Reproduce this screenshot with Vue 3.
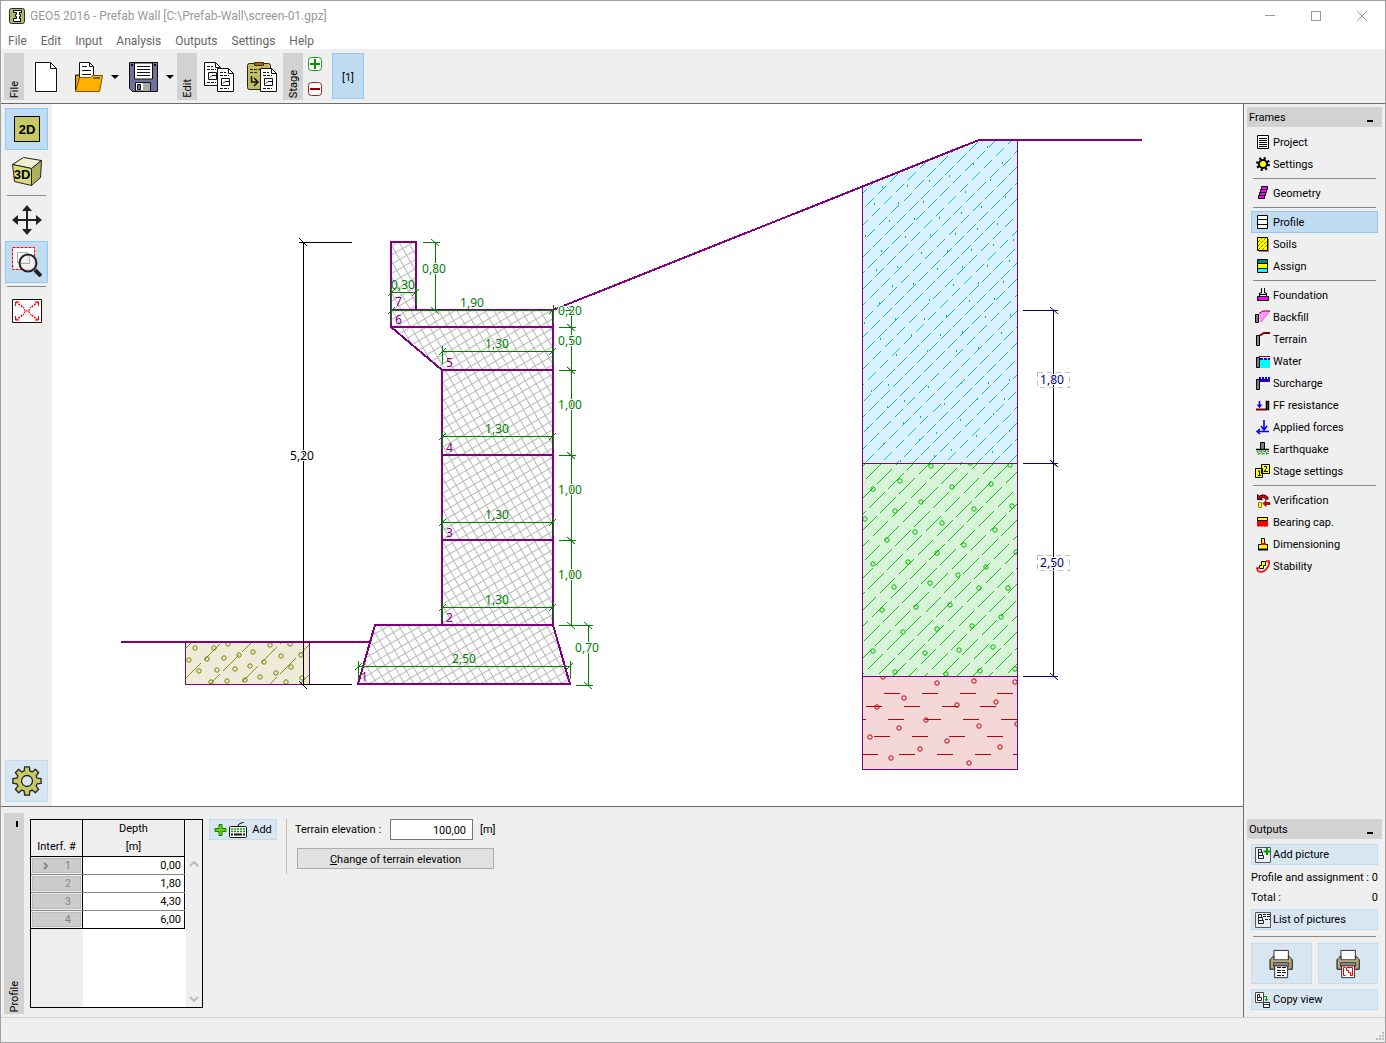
<script setup>
import { ref } from 'vue'

const menus = ['File', 'Edit', 'Input', 'Analysis', 'Outputs', 'Settings', 'Help']

const terrain = ref('100,00')
const active = ref('Profile')

const wallBlock = '<path d="M1.5 4.5h3v10h-3z" fill="#808080" stroke="#000"/>'
const printer = '<path d="M6.500 11V1.500h19V11" fill="#fff" stroke="#111"/><path d="M1.500 11.500l4-4h1v4h19v-4h1l4 4v10h-4v-7h-21v7h-4z" fill="#b5a77c" stroke="#222"/><path d="M2 12h28v9H2z" fill="#b5a77c"/><path d="M1.500 11v10.500h29V11" fill="none" stroke="#222"/><path d="M6 14.500h20v4H6z" fill="#888" stroke="#333"/><path d="M7.500 18h17v12.500h-17z" fill="#fff" stroke="#111"/>'
const pageA = '<path d="M1.500 1.500h15v15h-15z" fill="#e8eef4" stroke="#555"/><path d="M4.500 3.500v9M4.500 3.500h3v3M4.500 6.500h4v3M4.500 9.500h5v3h-5z" fill="none" stroke="#222"/>'
const report = '<path d="M.5.5h11l5 5v18h-16z" fill="#fff" stroke="#111"/><path d="M11.500.5v5h5" fill="none" stroke="#111"/><path d="M3 4.500h6M3 7.500h9M3 20.500h9" stroke="#111" stroke-dasharray="3 1"/><path d="M4.500 10.500h8v7h-8zM6 15.500l2-2h4" fill="none" stroke="#111"/>'

const icons = {
  Project: '<path d="M2.500 1.500h11v13h-11z" fill="#fff" stroke="#000"/><path d="M4 4.500h8M4 6.500h8M4 8.500h8M4 10.500h8M4 12.500h8" stroke="#000"/>',
  Settings: '<circle cx="8" cy="8" r="5.500" fill="none" stroke="#000" stroke-width="3" stroke-dasharray="2 2.320"/><circle cx="8" cy="8" r="4" fill="#ff0" stroke="#000" stroke-width="2"/>',
  Geometry: '<path d="M6.500 1.500h6v3h-6zM5.500 4.500h6v3h-6zM4.500 7.500h6v3h-6zM3.500 10.500h6v3h-6z" fill="#f0f" stroke="#000"/>',
  Profile: '<path d="M2.500 1.500h10v13h-10zM2.500 5.500h10M2.500 10.500h10" fill="#fff" stroke="#000"/>',
  Soils: '<path d="M4 3h10v13H4z" fill="#888"/><path d="M2.500 1.500h10v13h-10z" fill="#ff0" stroke="#000"/><path d="M3 6l4-4M3 10l8-8M3 14l9-9M7 14l5-5" stroke="#770" stroke-dasharray="3 1"/>',
  Assign: '<path d="M2.500 1.500h10v13h-10z" fill="#ff0" stroke="#000"/><path d="M3 2h9v3H3z" fill="#088"/><path d="M3 11h9v3H3z" fill="#0ff"/><path d="M3 5.500h9M3 10.500h9" stroke="#000"/>',
  Foundation: '<path d="M6.500 1v5h-2v3M9.500 1v5h2v3" fill="none" stroke="#000"/><path d="M2.500 9.500h11v4h-11z" fill="#f0f" stroke="#000"/><path d="M4 7.500h8" stroke="#000"/>',
  Backfill: '<path d="M4 5l4-3h7L6 13H5z" fill="#f9f"/><path d="M15 2L6 13" stroke="#f0f" stroke-dasharray="2 1"/><path d="M.5 5.500h3v8h-3z" fill="#808080" stroke="#000"/><path d="M4 4.500l4-2.500h7" fill="none" stroke="#800000"/>',
  Terrain: wallBlock + '<path d="M4 5l5-3h6" fill="none" stroke="#800000" stroke-width="2"/>',
  Water: '<path d="M5 6h10v9H5z" fill="#0ff"/><path d="M5 6h10" stroke="#00f" stroke-width="2" stroke-dasharray="3 1"/><path d="M4 3.500h11" stroke="#a00000"/>' + wallBlock,
  Surcharge: '<path d="M4 2h2v2h1V2h2v2h1V2h2v2h1V2h2v4H4z" fill="#00f"/><path d="M4 6.500h11" stroke="#800000"/>' + wallBlock,
  'FF resistance': '<path d="M4.500 4v6M2.500 7.500l2 2.500 2-2.500" fill="none" stroke="#00f" stroke-width="1.500"/><path d="M1 12.500h10" stroke="#800000" stroke-width="2"/><path d="M11.500 4.500h2v8h-2z" fill="#808080" stroke="#000" stroke-width="1.500"/>',
  'Applied forces': '<path d="M9 1v9M6 7l3 4 3-4M14 12.500H3M5 10l-3 2.500L5 15" fill="none" stroke="#00f" stroke-width="1.600"/>',
  Earthquake: '<path d="M5.500 1.500h4v7h-4z" fill="#808080" stroke="#000"/><path d="M1 8.500h13" stroke="#000" stroke-width="1.500"/><path d="M3 9l-1 2 2 1-1 2M7 9l-1 2 2 1-1 2M11 9l-1 2 2 1-1 2" fill="none" stroke="#0b0"/><path d="M5 10v4M9 10v4M13 10v4" stroke="#000" stroke-dasharray="1 1"/>',
  'Stage settings': '<path d="M6.500 1.500h8v9h-8zM.500 5.500h7v9h-7z" fill="#ff0" stroke="#000"/><path d="M9 3.500h2.500v2L9 8.500h4M3 8h1.500v4M3 12.500h3" fill="none" stroke="#000"/>',
  Verification: '<path d="M5 5.500a4 3.500 0 0 1 7 2" fill="none" stroke="#000" stroke-width="3.500"/><path d="M5 5.500a4 3.500 0 0 1 7 2" fill="none" stroke="#e00" stroke-width="2"/><path d="M2.500 2.500v5h5z" fill="#e00" stroke="#000"/><path d="M3.500 10.500h3v5h-3z" fill="#ff0" stroke="#880"/><path d="M8 11.500l3-3v2h4v2h-4v2z" fill="#e00" stroke="#600" stroke-width=".7"/>',
  'Bearing cap.': '<path d="M2.500 3.500h10v3h-10z" fill="#ff0" stroke="#000"/><path d="M2 7h11v5l-1 1-1-1-1 1-2-1-1 1-2-1-2 1-1-1z" fill="#f00"/>',
  Dimensioning: '<path d="M6.500 2.500h3v6h3v5h-9v-5h3z" fill="#ff0" stroke="#000"/><path d="M6 8h5" stroke="#f00" stroke-width="2"/><path d="M3 13.500h10" stroke="#000" stroke-width="2"/>',
  Stability: '<path d="M6.500 3.500h4v4h-2v3h-4v-3h2z" fill="#ff0" stroke="#000"/><path d="M11 3h3c1 5-4 11-8 11-3 0-4-2-4-4h3" fill="none" stroke="#e00" stroke-width="1.600"/>'
}

// Eight-tooth cog outline round (15, 15)
const cog = (() => {
  const pts = []
  for (let i = 0; i < 8; i++) {
    const a = (i * Math.PI) / 4
    for (const [da, r] of [[-0.27, 10.5], [-0.17, 14.3], [0.17, 14.3], [0.27, 10.5]]) {
      pts.push(`${(15 + r * Math.sin(a + da)).toFixed(1)} ${(15 - r * Math.cos(a + da)).toFixed(1)}`)
    }
  }
  return `M${pts.join('L')}z`
})()

const groups = [
  ['Project', 'Settings'],
  ['Geometry'],
  ['Profile', 'Soils', 'Assign'],
  ['Foundation', 'Backfill', 'Terrain', 'Water', 'Surcharge', 'FF resistance', 'Applied forces', 'Earthquake', 'Stage settings'],
  ['Verification', 'Bearing cap.', 'Dimensioning', 'Stability']
]

const rows = [
  { n: 1, depth: '0,00' },
  { n: 2, depth: '1,80' },
  { n: 3, depth: '4,30' },
  { n: 4, depth: '6,00' }
]

const diagonals = (from, to, step, x0, x1) => {
  let d = ''
  for (let c = from; c <= to; c += step) d += `M${x0} ${c - x0}L${x1} ${c - x1}`
  return d
}
const blueHatch = Array.from({ length: 32 }, (_, i) => ({ c: 1008 + i * 16, off: (i * 7) % 16 }))
const greenHatch = Array.from({ length: 26 }, (_, i) => ({ c: 1313 + i * 16, off: (i * 11) % 27 }))
const oliveHatch = diagonals(834, 990, 30, 185, 310)

const blueDots = [
  [987, 146], [1002, 162], [973, 163], [949, 175], [929, 180], [882, 186], [907, 185], [990, 179], [965, 191], [923, 201],
  [898, 202], [874, 203], [1005, 196], [981, 206], [961, 212], [939, 217], [914, 218], [889, 220], [997, 223], [977, 228],
  [955, 233], [930, 234], [905, 236], [865, 235], [1013, 239], [993, 244], [971, 249], [947, 250], [921, 252], [881, 250],
  [1009, 260], [987, 265], [962, 266], [937, 268], [897, 266], [876, 269], [1003, 281], [978, 282], [953, 284], [913, 283],
  [892, 285], [994, 298], [969, 300], [929, 299], [879, 302], [1010, 314], [985, 316], [946, 315], [924, 318], [895, 318],
  [864, 322], [880, 338], [911, 334], [940, 334], [962, 331], [1001, 332], [896, 354], [927, 350], [956, 350], [978, 347],
  [871, 390], [888, 384], [904, 400], [887, 406], [961, 382], [928, 386], [988, 382], [1009, 379], [977, 398], [1004, 398],
  [944, 403], [903, 422], [920, 416], [993, 413], [960, 419], [867, 427], [936, 432], [883, 443], [919, 439], [976, 435],
  [1009, 430], [951, 449], [992, 451], [934, 455], [900, 460]
]
const greenStones = [
  [931, 466], [970, 463], [1010, 465], [900, 481], [873, 489], [952, 487], [991, 484], [921, 502], [895, 511], [974, 509],
  [1012, 506], [865, 519], [942, 523], [915, 532], [995, 530], [887, 540], [964, 545], [937, 553], [1016, 552], [908, 562],
  [986, 567], [873, 564], [958, 575], [1008, 588], [930, 583], [979, 588], [894, 587], [882, 610], [916, 607], [950, 605],
  [1001, 617], [972, 626], [937, 629], [903, 632], [873, 651], [993, 647], [959, 650], [925, 653], [895, 672], [946, 674],
  [980, 671], [1015, 669]
]
const redStones = [
  [883, 677], [937, 683], [974, 681], [1015, 682], [904, 698], [877, 707], [957, 705], [996, 702], [926, 720], [899, 728],
  [979, 726], [1017, 724], [870, 737], [947, 741], [920, 749], [1000, 747], [891, 758], [969, 763]
]
const redDashes = [
  [884, 693], [922, 693], [960, 693], [997, 693], [866, 706], [904, 706], [942, 706], [980, 706], [850, 719], [888, 719],
  [925, 719], [963, 719], [1001, 719], [874, 736], [912, 736], [949, 736], [987, 736], [862, 754], [899, 754], [937, 754],
  [975, 754], [1013, 754]
].map(([x, y]) => `M${x} ${y + 0.5}h16`).join('')
const oliveStones = [
  [195, 648], [214, 648], [228, 644], [270, 645], [290, 644], [239, 655], [253, 652], [189, 660], [207, 659], [224, 658],
  [281, 656], [301, 655], [264, 662], [250, 666], [291, 667], [199, 671], [217, 670], [235, 669], [276, 673], [260, 677],
  [302, 678], [211, 682], [227, 681], [245, 680], [286, 682]
]

const widths = [
  { x1: 391, x2: 416, y: 292, t: '0,30' },
  { x1: 391, x2: 553, y: 310, t: '1,90' },
  { x1: 442, x2: 553, y: 351, t: '1,30' },
  { x1: 442, x2: 553, y: 436, t: '1,30' },
  { x1: 442, x2: 553, y: 522, t: '1,30' },
  { x1: 442, x2: 553, y: 607, t: '1,30' },
  { x1: 358, x2: 570, y: 666, t: '2,50' }
]
const heights = [
  { x: 435, y1: 242, y2: 310, t: '0,80' },
  { x: 571, y1: 310, y2: 327, t: '0,20' },
  { x: 571, y1: 327, y2: 370, t: '0,50' },
  { x: 571, y1: 370, y2: 455, t: '1,00' },
  { x: 571, y1: 455, y2: 540, t: '1,00' },
  { x: 571, y1: 540, y2: 625, t: '1,00' },
  { x: 588, y1: 625, y2: 685, t: '0,70' }
]
const layers = [
  { y1: 310, y2: 463, ty: 380, t: '1,80' },
  { y1: 463, y2: 676, ty: 563, t: '2,50' }
]
const blockNumbers = [
  [395, 306, 7], [395, 324, 6], [446, 367, 5], [446, 452, 4], [446, 537, 3], [446, 622, 2], [361, 681, 1]
]
</script>

<template>
  <div class="window">
    <header class="title">
      <svg class="logo" width="16" height="16" viewBox="0 0 16 16"><rect x=".5" y=".5" width="15" height="15" rx="2" fill="#b5b56a" stroke="#143c14" /><path d="M4.500 2.500h8v2h-2v2h1v2h-1v2h1v3h-7v-3h3v-2h-1v-2h1v-2h-3z" fill="#fff" stroke="#000" /></svg>
      <h1>GEO5 2016 - Prefab Wall [C:\Prefab-Wall\screen-01.gpz]</h1>
      <div class="controls">
        <button aria-label="Minimize"><svg width="12" height="12"><path d="M1 5.500h10" /></svg></button>
        <button aria-label="Maximize"><svg width="12" height="12"><path d="M1.500 1.500h9v9h-9z" /></svg></button>
        <button aria-label="Close"><svg width="12" height="12"><path d="M1 1l10 10M11 1L1 11" /></svg></button>
      </div>
    </header>

    <nav class="menu"><a v-for="m in menus" :key="m" href="#">{{ m }}</a></nav>

    <div class="toolbar">
      <div class="grip"><span>File</span></div>
      <div class="tools file-tools">
        <button aria-label="New"><svg width="24" height="32" viewBox="0 0 24 32"><path d="M1.500 1.500h15l6 6v23h-21z" fill="#fff" stroke="#111" /><path d="M16.500 1.500v6h6" fill="none" stroke="#111" /></svg></button>
        <button class="open" aria-label="Open"><svg width="30" height="32" viewBox="0 0 30 32"><path d="M1.500 14h4l2 3h8v12h-14z" fill="#e8a000" stroke="#111" /><path d="M5.500 18V1.500h10l4 4V18z" fill="#fff" stroke="#111" /><path d="M15.500 1.500v4h4M8 5.500h5M8 9.500h9M8 13.500h9" fill="none" stroke="#111" /><path d="M1.500 30.500l4-14h11l2-2h10l-3 16z" fill="#ffb000" stroke="#7a5200" /><path d="M19 17h7" stroke="#667" stroke-width="2" /></svg></button>
        <button class="drop" aria-label="Open recent"><svg width="8" height="6"><path d="M0 1h8L4 5z" /></svg></button>
        <button class="save" aria-label="Save"><svg width="32" height="32" viewBox="0 0 32 32"><path d="M2.500 1.500h28v29h-25l-3-3z" fill="#70709c" stroke="#111" /><path d="M7.500 2v16h18V2z" fill="#fff" stroke="#111" /><path d="M10 5.500h13M10 8.500h13M10 11.500h13M10 14.500h13" stroke="#111" /><path d="M4 4h2M27 4h2" stroke="#111" stroke-width="2" /><path d="M8.500 30v-8.500h15V30z" fill="#fff" stroke="#111" /><path d="M16 22h7v8h-7z" fill="#aaa" /><path d="M10.500 23.500h3v5h-3z" fill="#70709c" stroke="#111" /></svg></button>
        <button class="drop" aria-label="Save as"><svg width="8" height="6"><path d="M0 1h8L4 5z" /></svg></button>
      </div>
      <div class="grip"><span>Edit</span></div>
      <div class="tools edit-tools">
        <button aria-label="Copy"><svg width="32" height="32" viewBox="0 0 32 32"><g transform="translate(1 1)" v-html="report" /><g transform="translate(14 7)" v-html="report" /></svg></button>
        <button aria-label="Paste"><svg width="32" height="32" viewBox="0 0 32 32"><rect x="1.500" y="2.500" width="23" height="26" rx="2" fill="#c0c060" stroke="#222" /><path d="M8.500 1.500h9v3h-9z" fill="#c05a20" stroke="#331" /><path d="M4 8.500h17M4 11.500h8" stroke="#222" stroke-dasharray="3 1" /><path d="M5.500 15v6h6M8 17l4 4-4 4" fill="none" stroke="#111" stroke-width="1.500" /><g transform="translate(14 7)" v-html="report" /></svg></button>
      </div>
      <div class="grip"><span>Stage</span></div>
      <div class="stage-buttons">
        <button aria-label="Add stage"><svg width="14" height="14"><rect x=".5" y=".5" width="13" height="13" rx="3" fill="#fff" stroke="#1a9a1a" /><path d="M2 7h10M7 2v10" stroke="#090" stroke-width="2" /></svg></button>
        <button aria-label="Remove stage"><svg width="14" height="14"><rect x=".5" y=".5" width="13" height="13" rx="3" fill="#fff" stroke="#a02020" /><path d="M2 7h10" stroke="#900" stroke-width="2" /></svg></button>
      </div>
      <button class="stage">[1]</button>
    </div>

    <div class="body">
      <div class="work">
        <div class="view">
          <div class="modes">
            <button class="mode on" aria-label="2D view"><svg width="30" height="30" viewBox="0 0 30 30"><path d="M2.500 2.500h25v25h-25z" fill="#c8c864" stroke="#000" /><text x="15" y="20" text-anchor="middle" class="glyph">2D</text></svg></button>
            <button class="mode" aria-label="3D view"><svg width="30" height="30" viewBox="0 0 30 30"><path d="M.5 8.500l11-7 18 3-10 8z" fill="#eeeed0" stroke="#222" /><path d="M.5 8.500l19 4v17l-17-4z" fill="#dcdc78" stroke="#222" /><path d="M19.500 12.500l10-8-1 17-9 8z" fill="#b0b060" stroke="#222" /><text x="10" y="23" text-anchor="middle" class="glyph">3D</text></svg></button>
            <hr>
            <button class="mode" aria-label="Move"><svg width="30" height="30" viewBox="0 0 30 30"><path d="M15 3v24M3 15h24" stroke="#222" stroke-width="2" /><path d="M15 0l5 6H10zM15 30l5-6H10zM0 15l6-5v10zM30 15l-6-5v10z" fill="#222" /></svg></button>
            <button class="mode on" aria-label="Zoom area"><svg width="30" height="30" viewBox="0 0 30 30"><path d="M.5.500h22v22H.5z" fill="#fff" stroke="#f00" stroke-dasharray="3 1" /><path d="M5.500 5.500h10v10h-10z" fill="none" stroke="#aaa" /><circle cx="16" cy="16" r="8.500" fill="#eee" fill-opacity=".8" stroke="#222" stroke-width="2" /><path d="M9 16.500h8.500V9" fill="none" stroke="#aaa" /><path d="M23 23l6 6" stroke="#222" stroke-width="4" /></svg></button>
            <hr>
            <button class="mode" aria-label="Zoom all"><svg width="30" height="30" viewBox="0 0 30 30"><path d="M.5 3.500h29v23H.5z" fill="#fff" stroke="#111" /><g fill="none" stroke="#f00"><path d="M4 6l8 6M26 6l-8 6M4 24l8-6M26 24l-8-6" stroke-dasharray="2 1" stroke-width="1.500" /><path d="M3.500 10V6h4M26.500 10V6h-4M3.500 20v4h4M26.500 20v4h-4M12 13.500h1v3h-1M18 13.500h-1v3h1M14 15h2" /></g></svg></button>
            <button class="mode soft" aria-label="Drawing settings"><svg width="30" height="30" viewBox="0 0 30 30"><path :d="cog" fill="#c8c864" stroke="#222" stroke-width="1.300" stroke-linejoin="round" /><circle cx="15" cy="15" r="5.500" fill="#d8e6f2" stroke="#222" stroke-width="1.300" /></svg></button>
          </div>

          <svg class="drawing" viewBox="52 104 1191 702" preserveAspectRatio="xMinYMin meet" role="img" aria-label="Wall section and soil profile">
            <defs>
              <pattern id="masonry" width="8" height="8" patternUnits="userSpaceOnUse" patternTransform="rotate(-30)"><path d="M0 .5h8M.5 0v8" stroke="#b8b8b8" /></pattern>
              <clipPath id="upper"><path d="M863 187L979 141h38v322H863z" /></clipPath>
              <clipPath id="middle"><path d="M863 464h154v212H863z" /></clipPath>
              <clipPath id="lower"><path d="M863 677h154v92H863z" /></clipPath>
              <clipPath id="front"><path d="M186 643h123v41H186z" /></clipPath>
            </defs>

            <g clip-path="url(#upper)" stroke="#00a8f8" fill="none" class="crisp">
              <path d="M862 140h156v324H862z" fill="#d8f2ff" stroke="none" />
              <path v-for="h in blueHatch" :key="h.c" class="hatch" :d="`M862 ${h.c - 862}L1018 ${h.c - 1018}`" stroke-dasharray="12 5" :stroke-dashoffset="h.off" />
              <path v-for="(p, i) in blueDots" :key="i" :d="`M${p[0] + 0.5} ${p[1]}v2`" />
            </g>
            <g clip-path="url(#middle)" stroke="#00b800" fill="none">
              <path d="M862 463h156v214H862z" fill="#d8f4d8" stroke="none" />
              <path v-for="h in greenHatch" :key="h.c" class="hatch" :d="`M862 ${h.c - 862}L1018 ${h.c - 1018}`" stroke-dasharray="22 5" :stroke-dashoffset="h.off" />
              <circle v-for="(p, i) in greenStones" :key="i" :cx="p[0]" :cy="p[1]" r="2.200" />
            </g>
            <g clip-path="url(#lower)" stroke="#c00000" fill="none">
              <path d="M862 676h156v94H862z" fill="#f4d8d8" stroke="none" />
              <path class="crisp" :d="redDashes" />
              <circle v-for="(p, i) in redStones" :key="i" :cx="p[0]" :cy="p[1]" r="2.200" />
            </g>
            <g clip-path="url(#front)" stroke="#808000" fill="none">
              <path d="M185 642h125v43H185z" fill="#eeecd8" stroke="none" />
              <path class="hatch" :d="oliveHatch" stroke-dasharray="22 5" />
              <circle v-for="(p, i) in oliveStones" :key="i" :cx="p[0]" :cy="p[1]" r="2.200" />
            </g>
            <path class="crisp" d="M862.500 187v582h155V140M862.500 463.500h155M862.500 676.500h155M185.500 642v42.500h124V642" fill="none" stroke="#800080" />

            <path d="M391 242h25v68h137v315l17 59H358l17-59h67V370l-51-43z" fill="url(#masonry)" />
            <path class="crisp" d="M391 242h25v68h137v315l17 59H358l17-59h67V370l-51-43zM391 310h25M391 327h162M442 370h111M442 455h111M442 540h111M442 625h111M121 642h249M553 310L979 140h163" fill="none" stroke="#800080" stroke-width="2" />

            <g fill="none" stroke="#008000">
              <path v-for="(w, i) in widths" :key="i" class="crisp" :d="`M${w.x1} ${w.y + .5}H${w.x2}M${w.x1 + .5} ${w.y - 5}v18M${w.x2 + .5} ${w.y - 5}v18`" />
              <path v-for="(w, i) in widths" :key="i" :d="`M${w.x1 - 3} ${w.y + 4}l7-7M${w.x2 - 4} ${w.y + 4}l7-7`" />
              <path v-for="(h, i) in heights" :key="i" class="crisp" :d="`M${h.x + .5} ${h.y1}V${h.y2}M${h.x - 12} ${h.y1 + .5}h17M${h.x - 12} ${h.y2 + .5}h17`" />
              <path v-for="(h, i) in heights" :key="i" :d="`M${h.x - 4} ${h.y1 - 3}l8 7M${h.x - 4} ${h.y2 - 3}l8 7`" />
            </g>
            <g fill="#008000" text-anchor="middle">
              <text v-for="(w, i) in widths" :key="i" :x="Math.floor((w.x1 + w.x2) / 2)" :y="w.y - 3">{{ w.t }}</text>
              <text v-for="(h, i) in heights" :key="i" class="halo" :x="h.x - 1" :y="Math.floor((h.y1 + h.y2) / 2) - 3">{{ h.t }}</text>
            </g>
            <g fill="none" stroke="#000"><path class="crisp" d="M303.500 242v443M299 242.500h53M303 684.500h49" /><path d="M299 238l8 8M299 681l8 8" /></g>
            <text class="halo" x="302" y="460" text-anchor="middle">5,20</text>
            <g v-for="l in layers" :key="l.t">
              <path class="crisp" :d="`M1053.500 ${l.y1}V${l.y2}M1023 ${l.y1 + .5}h35M1023 ${l.y2 + .5}h35`" fill="none" stroke="#000080" />
              <path :d="`M1050 ${l.y1 - 3}l8 7M1050 ${l.y2 - 3}l8 7`" fill="none" stroke="#000080" />
              <rect class="crisp" x="1037.500" :y="l.ty - 7.5" width="32" height="15" fill="none" stroke="#c0c0c0" stroke-dasharray="5 4" />
              <text class="halo" x="1052" :y="l.ty + 4" text-anchor="middle" fill="#000080">{{ l.t }}</text>
            </g>
            <g fill="#800080"><text v-for="b in blockNumbers" :key="b[2]" :x="b[0]" :y="b[1]">{{ b[2] }}</text></g>
          </svg>
        </div>

        <section class="panel">
          <div class="grip tall"><i></i><span>Profile</span></div>
          <div class="grid">
            <table>
              <thead><tr><th>Interf. #</th><th>Depth<br>[m]</th></tr></thead>
              <tbody>
                <tr v-for="r in rows" :key="r.n">
                  <th><div><svg v-if="r.n === 1" width="6" height="8"><path d="M1 1l3 3-3 3" fill="none" stroke="#888" stroke-width="2" /></svg>{{ r.n }}</div></th>
                  <td>{{ r.depth }}</td>
                </tr>
              </tbody>
            </table>
            <div class="scroll">
              <svg width="10" height="6"><path d="M1 5l4-4 4 4" /></svg>
              <svg width="10" height="6"><path d="M1 1l4 4 4-4" /></svg>
            </div>
          </div>
          <button class="soft add"><svg width="34" height="16" viewBox="0 0 34 16"><path d="M5 2.500h3v4h4v3H8v4H5v-4H1v-3h4z" fill="#7c0" stroke="#080" /><rect x="15.500" y="4.500" width="17" height="11" rx="1" fill="#fff" stroke="#111" /><path d="M24 4l1-2 5-2" fill="none" stroke="#111" /><path d="M17 7h14M17 9.500h14" stroke="#090" stroke-width="1.500" stroke-dasharray="2 1" /><path d="M17 12.500h14" stroke="#111" stroke-width="2" stroke-dasharray="2 1 8 1" /></svg>Add</button>
          <form class="elevation" @submit.prevent>
            <div class="field"><label for="terrain">Terrain elevation :</label><input id="terrain" v-model="terrain" type="text"><span>[m]</span></div>
            <button><u>C</u>hange of terrain elevation</button>
          </form>
        </section>
      </div>

      <aside>
        <h2>Frames<i></i></h2>
        <div class="frames">
          <template v-for="(g, i) in groups" :key="i">
            <hr v-if="i > 0">
            <button v-for="f in g" :key="f" :class="{ on: f === active }" @click="active = f"><svg width="16" height="16" viewBox="0 0 16 16" v-html="icons[f]" />{{ f }}</button>
          </template>
        </div>
        <h2>Outputs<i></i></h2>
        <div class="outputs">
          <button class="soft"><svg width="18" height="18" viewBox="0 0 18 18"><g v-html="pageA" /><path d="M13 2v7M9.500 5.500h7" stroke="#090" stroke-width="2" /></svg>Add picture</button>
          <p><span>Profile and assignment :</span><span>0</span></p>
          <p><span>Total :</span><span>0</span></p>
          <button class="soft"><svg width="18" height="18" viewBox="0 0 18 18"><g v-html="pageA" /><path d="M9 3.500h7M9 5.500h7M11 8.500h5" stroke="#222" stroke-dasharray="3 1" /></svg>List of pictures</button>
          <hr>
          <div class="printers">
            <button class="soft" aria-label="Print text"><svg width="32" height="32" viewBox="0 0 32 32"><g transform="translate(4 1) scale(.76 .94)" v-html="printer" /><path d="M12 19.500h10M12 22.500h8M12 24.500h10M12 27.500h7" stroke="#111" stroke-dasharray="4 1" /></svg></button>
            <button class="soft" aria-label="Print picture"><svg width="32" height="32" viewBox="0 0 32 32"><g transform="translate(4 1) scale(.76 .94)" v-html="printer" /><path d="M13.500 19.500h-2v8h2M14.500 19.500h6v8h-2v-3h-2v-2h-2z" fill="none" stroke="#e00" /></svg></button>
          </div>
          <button class="soft"><svg width="18" height="18" viewBox="0 0 18 18"><path d="M1.500 1.500h8v10h-8z" fill="#fff" stroke="#444" /><path d="M3.500 3.500v6h4v-3h-4M3.500 3.500h2v3" fill="none" stroke="#222" /><path d="M10 5.500h2.500v4M11 8l1.500 2L14 8" fill="none" stroke="#090" /><path d="M9.500 11.500h6v5h-6zM9.500 13.500h6" fill="#fff" stroke="#222" /></svg>Copy view</button>
        </div>
      </aside>
    </div>
    <footer><svg width="10" height="10"><path d="M7 0h2v2H7zM4 3h2v2H4zM7 3h2v2H7zM1 6h2v2H1zM4 6h2v2H4zM7 6h2v2H7z" fill="#bbb" /></svg></footer>
  </div>
</template>

<style>
body { margin: 0; }
</style>

<style scoped>
.window { box-sizing: border-box; min-height: 100vh; display: flex; flex-direction: column; border: 1px solid #a0a0a0; background: #efefef; color: #000; font: 11px/14px Roboto, "Noto Sans", sans-serif; }
button { display: flex; align-items: center; justify-content: center; padding: 0; border: 0; background: none; color: inherit; font: inherit; }
svg { flex: none; display: block; }
hr { margin: 0; border: 0; height: 1px; background: #888; }
.crisp { shape-rendering: crispEdges; }
.hatch { shape-rendering: crispEdges; stroke-width: .9; }

.title { display: flex; align-items: center; height: 29px; padding-left: 8px; background: #fff; color: #999; }
.title h1 { flex: 1; margin: 0 0 0 5px; font: 12px/16px Roboto, "Noto Sans", sans-serif; }
.controls { display: flex; }
.controls button { width: 46px; height: 29px; }
.controls path { fill: none; stroke: #999; }
.menu { display: flex; gap: 14px; height: 19px; padding-left: 7px; background: #fff; font: 12px/22px Roboto, "Noto Sans", sans-serif; }
.menu a { color: #666; text-decoration: none; }

.toolbar { display: flex; align-items: flex-start; height: 50px; padding: 4px 0 0 3px; border-bottom: 1px solid #6e6a6e; }
.grip { display: flex; flex-direction: column; justify-content: flex-end; align-items: center; width: 20px; height: 47px; background: #d2d2d2; }
.grip span { writing-mode: vertical-rl; transform: rotate(180deg); padding: 2px 2px 0 0; }
.tools { display: flex; height: 47px; align-items: center; }
.tools button { flex: none; }
.file-tools { width: 153px; padding-left: 10px; box-sizing: border-box; }
.open { margin-left: 16px; }
.tools .drop { margin: 0 8px 0 7px; }
.edit-tools { width: 86px; gap: 11px; padding-left: 6px; box-sizing: border-box; }
.stage-buttons { display: flex; flex-direction: column; gap: 11px; padding: 4px 10px 0 5px; }
.stage { box-sizing: border-box; width: 32px; height: 46px; padding-top: 3px; border: 1px solid #90c8f6; background: #c0dcf3; }

.body { flex: 1; display: flex; }
.work { flex: 1; min-width: 0; display: flex; flex-direction: column; }
.view { flex: 1; display: flex; background: #fff; }
.modes { display: flex; flex-direction: column; width: 51px; box-sizing: border-box; padding: 4px; background: #efefef; }
.modes hr { width: 39px; margin: 3px 2px; }
.mode { width: 43px; height: 42px; box-sizing: border-box; border: 1px solid transparent; }
.mode.on { border-color: #90c8f6; background: #c0dcf3; }
.mode.soft { margin-top: auto; }
.glyph { font: bold 13px "Liberation Sans", sans-serif; }
.drawing { flex: 1; min-width: 0; width: 100%; font: 12px "Noto Sans", "Open Sans", sans-serif; }
.halo { paint-order: stroke; stroke: #fff; stroke-width: 2px; }
.soft { border: 1px solid #c0dcf3; background: #d8e6f2; }

.panel { display: flex; align-items: flex-start; min-height: 201px; padding: 6px 0 3px 3px; border-top: 1px solid #6e6a6e; }
.panel .tall { height: 201px; justify-content: space-between; }
.tall i { width: 2px; height: 6px; margin: 8px 0 0 6px; background: #000; }
.grid { display: grid; grid-template-columns: 52px 102px 17px; grid-template-rows: auto 1fr; width: 171px; height: 187px; margin: 6px 6px 0; border: 1px solid #000; background: linear-gradient(90deg, #efefef 52px, #fff 52px 155px, #efefef 155px); }
table { grid-column: 1 / 3; width: 154px; border-collapse: collapse; table-layout: fixed; background: #efefef; }
th { font-weight: normal; width: 51px; padding: 0; }
thead th { height: 35px; line-height: 18px; vertical-align: bottom; border-bottom: 1px solid #000; border-right: 1px solid #000; }
thead th + th { width: auto; }
tbody th, td { height: 17px; border-bottom: 1px solid #888; border-right: 1px solid #000; line-height: 15px; }
tbody tr:last-child > * { border-bottom-color: #000; }
tbody div { display: flex; justify-content: flex-end; align-items: center; gap: 16px; height: 13px; margin: 1px; padding-right: 9px; border: 1px solid #bbb; background: #ccc; color: #888; }
td { padding: 0 3px 0 0; text-align: right; background: #fff; }
.scroll { grid-column: 3; grid-row: 1 / 3; display: flex; flex-direction: column; align-items: center; justify-content: space-between; padding: 41px 0 5px; }
.scroll path { fill: none; stroke: #bbb; stroke-width: 2; }
.add { width: 68px; height: 21px; margin-top: 6px; gap: 4px; }
.elevation { margin: 6px 0 0 9px; padding-left: 8px; height: 55px; border-left: 1px solid #bcbcb4; }
.field { display: flex; align-items: center; gap: 7px; height: 21px; }
.field label { width: 88px; white-space: nowrap; }
.field input { box-sizing: border-box; width: 83px; height: 21px; padding: 1px 6px 0; border: 1px solid #777; background: #fff; font: inherit; text-align: right; }
.elevation button { box-sizing: border-box; width: 197px; height: 21px; margin: 8px 0 0 2px; padding-top: 2px; border: 1px solid #adadad; background: #e1e1e1; }

aside { display: flex; flex-direction: column; width: 142px; box-sizing: border-box; padding: 3px 3px 7px; border-left: 1px solid #6e6a6e; }
h2 { display: flex; justify-content: space-between; align-items: center; box-sizing: border-box; height: 20px; margin: 0; padding: 2px 9px 0 2px; background: #d2d2d2; font: inherit; }
h2 i { width: 6px; height: 2px; margin-top: 5px; background: #000; }
.frames { flex: 1; padding: 4px; }
.frames hr { margin: 3px 2px; }
.frames button { width: 100%; height: 22px; justify-content: flex-start; gap: 2px; padding: 2px 0 0 3px; border: 1px solid transparent; box-sizing: border-box; }
.frames svg { margin-bottom: 2px; }
.frames button.on { border-color: #90c8f6; background: #c0dcf3; }
.outputs { display: flex; flex-direction: column; padding: 5px 4px 0; }
.outputs > button { height: 21px; justify-content: flex-start; gap: 1px; padding-left: 2px; box-sizing: border-box; }
.outputs p { display: flex; justify-content: space-between; margin: 0; line-height: 20px; white-space: nowrap; }
.outputs p + button { margin-top: 1px; }
.outputs p:first-of-type { margin-top: 3px; }
.outputs hr { margin: 6px 2px; }
.printers { display: flex; gap: 6px; margin-bottom: 5px; }
.printers button { flex: 1; height: 41px; box-sizing: border-box; }
footer { display: flex; justify-content: flex-end; align-items: flex-end; height: 24px; border-top: 1px solid #d4d4d4; }
</style>
